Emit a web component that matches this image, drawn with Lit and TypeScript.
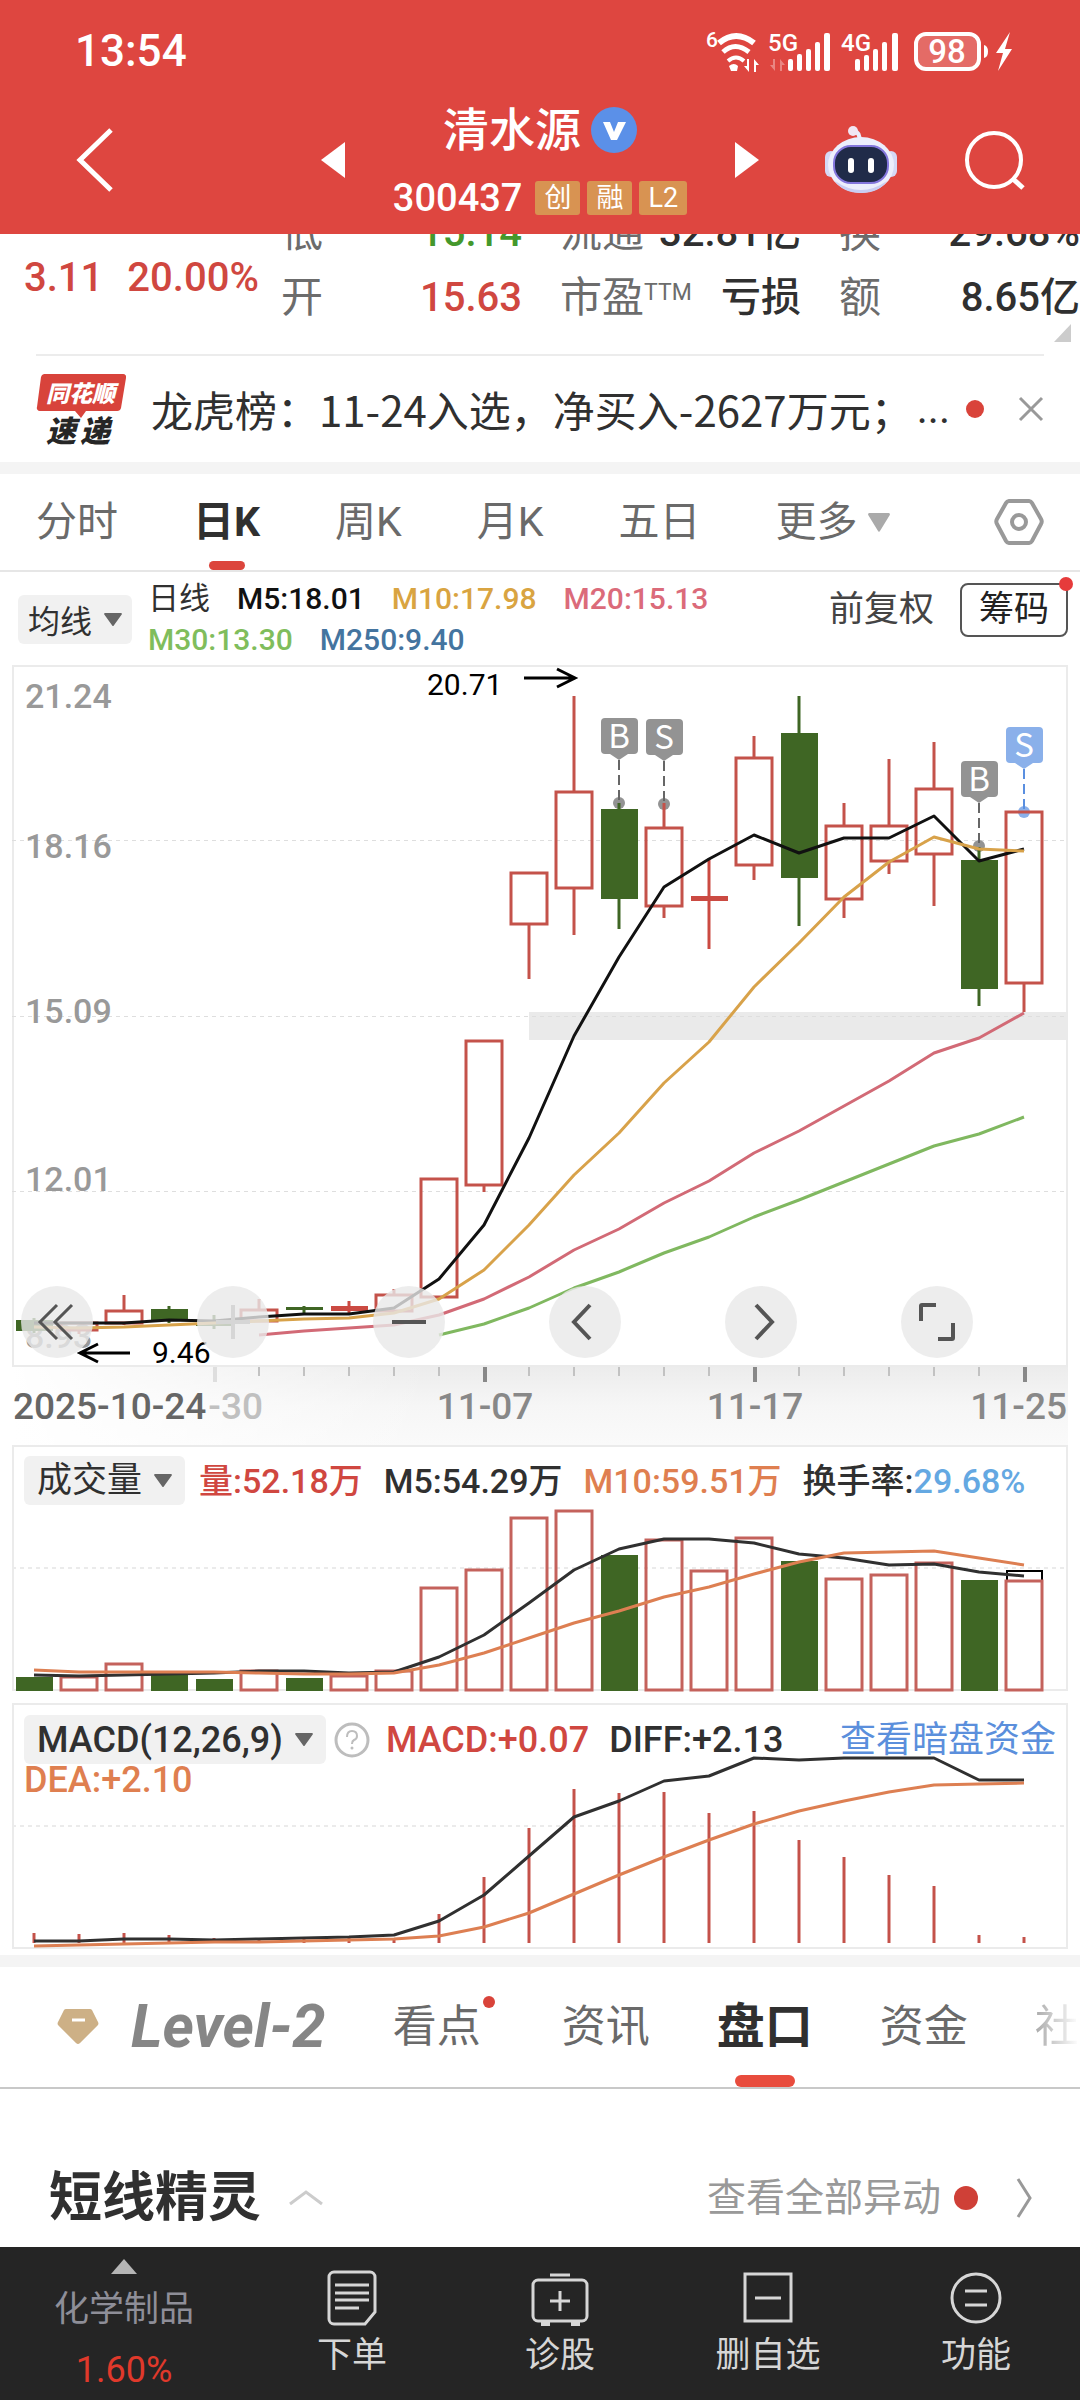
import { LitElement, html, svg, css } from 'lit';
import { customElement } from 'lit/decorators.js';

const FIRST_X = 34;
const STEP = 45;
const xAt = (i: number) => FIRST_X + STEP * i;
const points = (ys: number[], start = 0) => ys.map((y, i) => `${xAt(i + start)},${y}`).join(' ');

type Kind = 'up' | 'down' | 'flatUp' | 'flatDown';
// kind, body top, body bottom, high, low
const candles: [Kind, number, number, number, number][] = [
  ['down', 1320, 1331, 1318, 1333],
  ['up', 1323, 1330, 1322, 1334],
  ['up', 1311, 1323, 1295, 1325],
  ['down', 1309, 1320, 1306, 1323],
  ['flatDown', 1323, 1326, 1315, 1329],
  ['up', 1310, 1321, 1299, 1322],
  ['flatDown', 1307, 1310, 1306, 1315],
  ['flatUp', 1306, 1311, 1301, 1315],
  ['up', 1295, 1311, 1289, 1312],
  ['up', 1179, 1297, 1179, 1297],
  ['up', 1041, 1185, 1041, 1192],
  ['up', 873, 924, 873, 979],
  ['up', 792, 888, 696, 935],
  ['down', 809, 899, 803, 929],
  ['up', 828, 906, 803, 918],
  ['flatUp', 896, 901, 859, 949],
  ['up', 758, 865, 736, 880],
  ['down', 733, 878, 696, 926],
  ['up', 826, 899, 803, 918],
  ['up', 826, 861, 759, 874],
  ['up', 789, 854, 742, 906],
  ['down', 860, 989, 847, 1006],
  ['up', 812, 983, 812, 1012],
];
const ma5 = [1323, 1323, 1323, 1320, 1321, 1317, 1314, 1314, 1308, 1279, 1225, 1138, 1036, 957, 887, 859, 835, 853, 838, 838, 816, 861, 849];
const ma10 = [1327, 1328, 1327, 1325, 1323, 1321, 1319, 1318, 1313, 1299, 1270, 1225, 1175, 1133, 1083, 1042, 987, 943, 897, 862, 837, 849, 851];
const ma20 = [1335, 1331, 1328, 1325, 1315, 1299, 1277, 1250, 1229, 1203, 1181, 1153, 1131, 1106, 1081, 1053, 1038, 1013];
const ma30 = [1335, 1324, 1308, 1288, 1272, 1253, 1237, 1217, 1200, 1182, 1164, 1146, 1134, 1117];

const volumeTops = [1677, 1677, 1664, 1674, 1679, 1671, 1678, 1676, 1671, 1588, 1570, 1518, 1511, 1555, 1540, 1571, 1538, 1561, 1579, 1575, 1563, 1580, 1581];
const volumeDown = new Set([0, 3, 4, 6, 13, 17, 21]);
const volMa5 = [1675, 1676, 1675, 1674, 1673, 1671, 1671, 1673, 1672, 1657, 1635, 1603, 1570, 1549, 1539, 1539, 1543, 1554, 1558, 1565, 1564, 1572, 1576];
const volMa10 = [1670, 1672, 1672, 1672, 1672, 1673, 1674, 1674, 1673, 1665, 1653, 1638, 1623, 1611, 1597, 1587, 1574, 1562, 1553, 1552, 1551, 1558, 1565];

const macdTops = [1933, 1934, 1933, 1935, 1938, 1938, 1939, 1938, 1938, 1914, 1877, 1828, 1789, 1793, 1792, 1813, 1811, 1840, 1857, 1875, 1886, 1935, 1937];
const diff = [1941, 1941, 1939, 1939, 1940, 1939, 1938, 1937, 1935, 1921, 1895, 1856, 1817, 1801, 1781, 1776, 1758, 1760, 1758, 1758, 1758, 1780, 1780];
const dea = [1946, 1945, 1944, 1943, 1942, 1942, 1941, 1940, 1939, 1936, 1927, 1913, 1894, 1875, 1857, 1840, 1824, 1811, 1801, 1792, 1785, 1784, 1783];

const markers = [
  { i: 13, label: 'B', top: 718, dot: 803, box: '#939393', line: '#666' },
  { i: 14, label: 'S', top: 719, dot: 804, box: '#939393', line: '#666' },
  { i: 21, label: 'B', top: 761, dot: 846, box: '#939393', line: '#666' },
  { i: 22, label: 'S', top: 727, dot: 812, box: '#8ab0ea', line: '#5a8fe0' },
];

@customElement('app-root')
export class AppRoot extends LitElement {
  static styles = css`
    :host {
      display: block;
      background: #fff;
      color: #303030;
      font-family: Roboto, 'Noto Sans CJK SC', sans-serif;
    }
    * { box-sizing: border-box; }
    svg { display: block; }
    button, a {
      font: inherit;
      color: inherit;
      background: none;
      border: 0;
      padding: 0;
      margin: 0;
      text-decoration: none;
      white-space: nowrap;
    }
    h1, h2, p { margin: 0; font: inherit; }

    .top { background: #de4640; color: #fff; }
    .status {
      display: flex;
      justify-content: space-between;
      align-items: center;
      padding: 26px 66px 26px 75px;
      font-size: 44px;
      font-weight: 500;
      line-height: 50px;
    }
    .nav {
      display: grid;
      grid-template-columns: 1fr 438px 1fr;
      align-items: center;
      padding: 0 54px 16px;
    }
    .back { padding-left: 22px; }
    .nav-right { display: flex; justify-content: flex-end; align-items: center; gap: 67px; }
    .stock { display: flex; justify-content: space-between; align-items: center; }
    .stock-title { display: flex; flex-direction: column; align-items: center; gap: 20px; }
    .stock-name { display: flex; align-items: center; gap: 10px; font-size: 46px; line-height: 56px; font-weight: 500; }
    .stock-code { display: flex; align-items: center; gap: 7px; font-size: 38px; line-height: 40px; font-weight: 500; }
    .stock-code b { font-weight: 500; margin-right: 6px; }
    .tag { background: #d89352; border-radius: 3px; font-size: 27px; line-height: 34px; padding: 0 9px; font-weight: 400; }

    .quote { position: relative; overflow: hidden; }
    .quote-body { display: flex; margin-top: -34px; padding-bottom: 24px; }
    .change {
      display: flex;
      gap: 24px;
      width: 281px;
      flex: none;
      align-self: flex-end;
      padding: 0 0 32px 24px;
      font-size: 40px;
      line-height: 40px;
      font-weight: 500;
      color: #d04740;
    }
    .facts { flex: 1; margin: 0; display: grid; grid-template-columns: repeat(3, 1fr); column-gap: 38px; grid-auto-rows: 65px; }
    .fact { display: flex; justify-content: space-between; align-items: center; font-size: 40px; line-height: 64px; white-space: nowrap; }
    .fact dt { font-size: 42px; color: #6c6c6c; }
    .fact dt sup { font-size: 23px; line-height: 20px; vertical-align: 12px; }
    .fact dd { margin: 0; font-weight: 500; }
    .up { color: #d04740; }
    .down { color: #44982c; }
    .corner { position: absolute; right: 9px; bottom: 12px; }

    .news {
      display: flex;
      align-items: center;
      gap: 25px;
      margin: 0 36px;
      border-top: 2px solid #ececec;
      height: 108px;
    }
    .headline { flex: 1; display: flex; align-items: center; gap: 16px; font-size: 42px; line-height: 60px; min-width: 0; }
    .headline a { font-family: 'Noto Sans CJK SC', sans-serif; overflow: hidden; }
    .red-dot { display: inline-block; background: #d9433a; border-radius: 50%; width: 18px; height: 18px; flex: none; }
    .headline .red-dot { margin-left: auto; margin-right: 9px; }
    .band { height: 12px; background: #f4f4f4; }

    .periods {
      display: flex;
      align-items: stretch;
      gap: 75px;
      padding: 0 36px;
      border-bottom: 2px solid #e6e6e6;
      font-size: 41px;
      line-height: 96px;
      color: #6a6a6a;
    }
    .period { position: relative; }
    .period.more { display: flex; align-items: center; gap: 10px; }
    .period.active { font-weight: 700; color: #303030; }
    .period.active::after, .tab.active::after {
      content: '';
      position: absolute;
      left: 50%;
      bottom: 0;
      width: 36px;
      height: 9px;
      margin-left: -18px;
      border-radius: 5px;
      background: #dc453c;
    }
    .periods .setting { margin-left: auto; }

    .indicators { display: flex; align-items: center; padding: 6px 12px 4px 18px; height: 92px; gap: 16px; }
    .pick {
      display: flex;
      align-items: center;
      gap: 12px;
      height: 49px;
      padding: 0 13px;
      border-radius: 6px;
      background: #f1f1f1;
      color: #303030;
    }
    .pick.average { font-size: 32px; padding: 0 10px; }
    .legend { flex: 1; display: flex; flex-wrap: wrap; column-gap: 27px; font-size: 30px; line-height: 41px; font-weight: 500; }
    .legend .name { font-size: 31px; font-weight: 400; }
    .chip-actions { display: flex; align-items: center; align-self: flex-start; gap: 26px; padding-top: 5px; font-size: 35px; line-height: 50px; }
    .adjust { color: #444; }
    .chips { position: relative; padding: 0 17px; border: 2px solid #555; border-radius: 8px; color: #222; }
    .chips .red-dot { position: absolute; right: -7px; top: -8px; width: 14px; height: 14px; background: #e63b3b; }
    .black { color: #111; }
    .amber { color: #d9a441; }
    .rose { color: #db6b7a; }
    .green { color: #80bd5c; }
    .navy { color: #44749f; }
    .orange { color: #df7f50; }
    .sky { color: #64a8e2; }

    .panel { display: grid; }
    .panel > * { grid-area: 1 / 1; min-width: 0; }
    .panel svg.chart { width: 100%; height: auto; }
    .tools { display: flex; justify-content: space-between; align-self: end; padding: 0 107px 87px 21px; }
    .tool { width: 72px; height: 72px; border-radius: 50%; background: rgba(232, 232, 232, 0.8); display: grid; place-items: center; }
    .readout { display: flex; align-items: center; align-self: start; padding: 11px 24px 0; font-size: 34px; line-height: 48px; white-space: nowrap; font-weight: 500; }
    .readout .pick { font-size: 35px; margin-right: 14px; font-weight: 400; }
    .readout .value { margin-right: 21px; }
    .macd-readout { align-self: start; padding: 12px 24px 0; font-size: 36px; line-height: 48px; white-space: nowrap; font-weight: 500; }
    .macd-line { display: flex; align-items: center; }
    .macd-line .help { margin: 0 16px 0 8px; }
    .macd-line .value { margin-right: 20px; }
    .macd-line a { margin-left: auto; color: #5b8fdc; font-weight: 400; }
    .second { line-height: 32px; }
    .label { font-family: Roboto, sans-serif; }

    .tabs { display: flex; align-items: center; gap: 67px; padding-left: 57px; border-bottom: 2px solid #c8c8c8; overflow: hidden; font-size: 44px; line-height: 120px; color: #6a6a6a; }
    .tab { position: relative; flex: none; }
    .tab.level { display: flex; align-items: center; gap: 32px; color: #868686; font-size: 60px; font-style: italic; font-weight: 700; }
    .tab.dotted { display: flex; gap: 2px; }
    .tab.dotted .red-dot { width: 12px; height: 12px; margin-top: 29px; }
    .tab.active { font-size: 48px; font-weight: 700; color: #303030; }
    .tab.active::after { width: 60px; height: 12px; margin-left: -30px; border-radius: 6px; background: #e84c3d; }
    .tab.fade { background: linear-gradient(90deg, #aaa, #fff); background-clip: text; -webkit-background-clip: text; color: transparent; }

    .section-head { display: flex; align-items: center; padding: 60px 48px 0 49px; height: 158px; }
    .section-head h2 { font-size: 53px; line-height: 90px; font-weight: 700; margin-right: 28px; }
    .section-head a { margin-left: auto; display: flex; align-items: center; font-size: 39px; line-height: 60px; color: #999; }
    .section-head .red-dot { width: 24px; height: 24px; margin: 0 38px 0 13px; background: #cf4037; }

    .bottom { display: grid; grid-template-columns: 248fr 208fr 208fr 208fr 208fr; background: #252525; color: #d6d6d6; height: 153px; }
    .action { display: flex; flex-direction: column; align-items: center; justify-content: flex-end; gap: 6px; font-size: 35px; line-height: 48px; padding-bottom: 20px; }
    .sector { display: flex; flex-direction: column; align-items: center; padding-top: 12px; font-size: 35px; line-height: 48px; color: #8e8e98; }
    .sector svg { margin-bottom: 12px; }
    .sector .pct { color: #e0392b; font-size: 36px; margin-top: 12px; }
  `;

  private caret(color: string, w = 18, h = 13) {
    return html`<svg width=${w} height=${h} viewBox="0 0 18 13" preserveAspectRatio="none"><path d="M1 0h16a1 1 0 0 1 .7 1.6L9.8 12.4a1 1 0 0 1-1.6 0L.3 1.6A1 1 0 0 1 1 0z" fill=${color} /></svg>`;
  }

  private statusIcons() {
    return html`<svg width="308" height="44" viewBox="706 28 308 44" fill="#fff" role="img" aria-label="状态栏">
      <text x="706" y="46" font-size="21" font-weight="500">6</text>
      <g fill="none" stroke="#fff" stroke-width="5">
        <path d="M719 42q17-14 35 0" stroke-width="6" />
        <path d="M723 51q12-11 26 0" />
        <path d="M728 60q8-7 16 0" stroke-width="4" />
      </g>
      <path d="M729 65q5-4 9 0l-1 5h-6z" />
      <path d="M749 58v13l-5-6h3v-7zM754 71V58l5 6h-3v7z" />
      <text x="768" y="50" font-size="24" font-weight="500">5G</text>
      <path d="M775 58v12l-5-6h3v-6zM780 70V58l5 6h-3v6z" opacity=".35" />
      <g>
        <rect x="788" y="58" width="5" height="12" rx="2" /><rect x="797" y="53" width="5" height="17" rx="2" />
        <rect x="806" y="48" width="5" height="22" rx="2" /><rect x="815" y="41" width="5" height="29" rx="2" />
        <rect x="824" y="32" width="6" height="38" rx="2" />
      </g>
      <text x="841" y="50" font-size="24" font-weight="500">4G</text>
      <g>
        <rect x="855" y="58" width="5" height="12" rx="2" /><rect x="864" y="54" width="5" height="16" rx="2" />
        <rect x="873" y="48" width="5" height="22" rx="2" /><rect x="882" y="41" width="5" height="29" rx="2" />
        <rect x="892" y="32" width="6" height="38" rx="2" />
      </g>
      <rect x="916" y="33" width="63" height="35" rx="10" fill="rgba(255,255,255,.2)" stroke="#fff" stroke-width="4" />
      <text x="947" y="62" font-size="33" font-weight="500" text-anchor="middle">98</text>
      <path d="M984 44q4 1 4 6.500t-4 6.500z" />
      <path d="M1010 31l-14 21h7l-5 18 14-22h-7z" />
    </svg>`;
  }

  private robot() {
    return html`<svg width="74" height="70" viewBox="823 124 74 70">
      <path d="M859 140q2-8-5-10" fill="none" stroke="#e9ecfb" stroke-width="4" />
      <circle cx="853" cy="130" r="5" fill="#f1e6f3" />
      <rect x="825" y="150" width="12" height="26" rx="6" fill="#d5d9f6" /><rect x="885" y="150" width="12" height="26" rx="6" fill="#d5d9f6" />
      <ellipse cx="861" cy="164" rx="33" ry="28" fill="#eceefc" />
      <path d="M835 180q26 18 52 0-8 12-26 12t-26-12z" fill="#c9cef3" />
      <rect x="834" y="145" width="54" height="37" rx="17" fill="#202b49" stroke="#8376dc" stroke-width="2" />
      <rect x="848" y="157" width="6" height="15" rx="3" fill="#fff" /><rect x="868" y="157" width="6" height="15" rx="3" fill="#fff" />
    </svg>`;
  }

  private header() {
    return html`<header class="top">
      <div class="status"><span>13:54</span>${this.statusIcons()}</div>
      <div class="nav">
        <button class="back" aria-label="返回"><svg width="38" height="66" viewBox="0 0 38 66"><path d="M35 3L4 33l31 30" fill="none" stroke="#fff" stroke-width="5" /></svg></button>
        <div class="stock">
          <button aria-label="上一只"><svg width="24" height="36" viewBox="0 0 24 36"><path d="M24 0v36L0 18z" fill="#fff" /></svg></button>
          <div class="stock-title">
            <h1 class="stock-name">清水源<svg width="46" height="46" viewBox="0 0 46 46"><circle cx="23" cy="23" r="23" fill="#5b90e8" /><path d="M12 15h7l4 10 4-10h8l-9 18h-6z" fill="#fff" /></svg></h1>
            <div class="stock-code"><b>300437</b><span class="tag">创</span><span class="tag">融</span><span class="tag">L2</span></div>
          </div>
          <button aria-label="下一只"><svg width="24" height="36" viewBox="0 0 24 36"><path d="M0 0v36l24-18z" fill="#fff" /></svg></button>
        </div>
        <div class="nav-right">
          <button aria-label="智能助手">${this.robot()}</button>
          <button aria-label="搜索"><svg width="62" height="62" viewBox="0 0 62 62" fill="none" stroke="#fff" stroke-width="4"><circle cx="30" cy="31" r="27" /><path d="M49 50l10 9" stroke-width="5" /></svg></button>
        </div>
      </div>
    </header>`;
  }

  private quote() {
    return html`<section class="quote">
      <div class="quote-body">
        <div class="change"><span>3.11</span><span>20.00%</span></div>
        <dl class="facts">
          <div class="fact"><dt>低</dt><dd class="down">15.14</dd></div>
          <div class="fact"><dt>流通</dt><dd>32.81亿</dd></div>
          <div class="fact"><dt>换</dt><dd>29.68%</dd></div>
          <div class="fact"><dt>开</dt><dd class="up">15.63</dd></div>
          <div class="fact"><dt>市盈<sup>TTM</sup></dt><dd>亏损</dd></div>
          <div class="fact"><dt>额</dt><dd>8.65亿</dd></div>
        </dl>
      </div>
      <svg class="corner" width="17" height="18" viewBox="0 0 17 18"><path d="M17 0v18H0z" fill="#ccc" /></svg>
    </section>
    <section class="news">
      <svg width="90" height="74" viewBox="36 370 90 74" role="img" aria-label="同花顺速递">
        <path d="M44 372h79a3 3 0 0 1 3 4l-5 30a4 4 0 0 1-4 3H86l-5 7-6-7H40a3 3 0 0 1-3-4l4-30a4 4 0 0 1 3-3z" fill="#d8433b" />
        <text x="46" y="400" font-size="23" font-weight="900" font-style="italic" fill="#fff">同花顺</text>
        <text x="46" y="440" font-size="30" font-weight="900" font-style="italic" fill="#262626">速</text>
        <text x="80" y="440" font-size="30" font-weight="900" font-style="italic" fill="#262626">递</text>
      </svg>
      <div class="headline"><a href="#news">龙虎榜：11-24入选，净买入-2627万元；</a><span>...</span><i class="red-dot"></i></div>
      <button aria-label="关闭"><svg width="26" height="26" viewBox="0 0 26 26"><path d="M2 2l22 22M24 2L2 24" stroke="#999" stroke-width="3" /></svg></button>
    </section>`;
  }

  private periods() {
    return html`<nav class="periods">
      <button class="period">分时</button>
      <button class="period active">日K</button>
      <button class="period">周K</button>
      <button class="period">月K</button>
      <button class="period">五日</button>
      <button class="period more">更多${this.caret('#aaa', 22, 19)}</button>
      <button class="setting" aria-label="设置"><svg width="50" height="48" viewBox="0 0 50 48" fill="none" stroke="#999" stroke-width="4"><path d="M15 3h20a4 4 0 0 1 3 2l9 16a5 5 0 0 1 0 5l-9 17a4 4 0 0 1-3 2H15a4 4 0 0 1-3-2L3 26a5 5 0 0 1 0-5l9-16a4 4 0 0 1 3-2z" /><circle cx="25" cy="24" r="7" /></svg></button>
    </nav>
    <div class="indicators">
      <button class="pick average">均线${this.caret('#666')}</button>
      <div class="legend">
        <span class="name">日线</span><span class="black">M5:18.01</span><span class="amber">M10:17.98</span><span class="rose">M20:15.13</span>
        <span class="green">M30:13.30</span><span class="navy">M250:9.40</span>
      </div>
      <div class="chip-actions">
        <button class="adjust">前复权</button>
        <button class="chips">筹码<i class="red-dot"></i></button>
      </div>
    </div>`;
  }

  private candle([kind, top, bottom, high, low]: [Kind, number, number, number, number], i: number) {
    const x = xAt(i);
    const red = '#c4524a';
    const green = '#3f6624';
    if (kind === 'up') {
      return svg`<path d="M${x} ${high}V${top}M${x} ${bottom}V${low}" stroke=${red} stroke-width="3" />
        <rect x=${x - 18} y=${top} width="36" height=${bottom - top} fill="none" stroke=${red} stroke-width="3" />`;
    }
    const color = kind === 'flatUp' ? '#cb4a42' : green;
    return svg`<path d="M${x} ${high}V${low}" stroke=${color} stroke-width="3" />
      <rect x=${x - 18} y=${top} width="37" height=${bottom - top} fill=${color} />`;
  }

  private priceChart() {
    return html`<section class="panel">
      <svg class="chart label" viewBox="0 664 1080 781" fill="none">
        <defs>
          <linearGradient id="axisDown" x1="0" y1="0" x2="0" y2="1"><stop offset="0" stop-color="#ececec" /><stop offset=".5" stop-color="#f6f6f6" /><stop offset="1" stop-color="#fafafa" /></linearGradient>
          <linearGradient id="axisSide" x1="0" y1="0" x2="1" y2="0"><stop offset="0" stop-color="#fff" /><stop offset="1" stop-color="#fff" stop-opacity="0" /></linearGradient>
        </defs>
        <rect x="12" y="1367" width="1056" height="78" fill="url(#axisDown)" />
        <rect x="12" y="1367" width="420" height="78" fill="url(#axisSide)" />
        <rect x="13" y="666" width="1054" height="700" stroke="#ebebeb" stroke-width="2" />
        <rect x="529" y="1012" width="539" height="28" fill="#eaeaea" />
        <g stroke="#dedede" stroke-dasharray="4 4"><path d="M12 840.500H1066M12 1016.500H1066M12 1191.500H1066" /></g>
        <g font-size="34" font-weight="500" fill="#999">
          <text x="25" y="708">21.24</text><text x="25" y="858">18.16</text><text x="25" y="1023">15.09</text><text x="25" y="1191">12.01</text><text x="25" y="1348">8.93</text>
        </g>
        ${markers.map(m => svg`<circle cx=${xAt(m.i)} cy=${m.dot} r="6" fill=${m.box} />
          <path d="M${xAt(m.i)} ${m.top + 42}V${m.dot}" stroke=${m.line} stroke-width="2" stroke-dasharray="10 5" />`)}
        ${candles.map((c, i) => this.candle(c, i))}
        <g stroke-width="3" stroke-linejoin="round">
          <polyline points=${points(ma30, 9)} stroke="#80b860" />
          <polyline points=${points(ma20, 5)} stroke="#d26a76" />
          <polyline points=${points(ma5)} stroke="#111" />
          <polyline points=${points(ma10)} stroke="#d8a24a" />
        </g>
        ${markers.map(m => svg`<rect x=${xAt(m.i) - 18} y=${m.top} width="37" height="36" rx="4" fill=${m.box} />
          <path d="M${xAt(m.i) - 9} ${m.top + 36}h18l-9 6z" fill=${m.box} />
          <text x=${xAt(m.i)} y=${m.top + 30} text-anchor="middle" font-size="33" font-family="Noto Sans CJK SC" fill="#fff">${m.label}</text>`)}
        <g fill="#000" font-size="30"><text x="427" y="695">20.71</text><text x="152" y="1363">9.46</text></g>
        <path d="M524 678h50M557 669l18 9-18 9M130 1353H80M98 1344l-18 9 18 9" stroke="#000" stroke-width="3" />
        ${candles.map((_, i) => i < 4 ? null : i % 6 === 4
          ? svg`<path d="M${xAt(i) + 1} 1367v15" stroke=${i === 4 ? '#dedede' : '#888'} stroke-width="4" />`
          : svg`<path d="M${xAt(i)} 1367v9" stroke="#c2c2c2" stroke-width="2" />`)}
        <g font-size="37" font-weight="500" fill="#888">
          <text x="13" y="1419" fill="#666">2025-10-24</text><text x="263" y="1419" fill="#c0c0c0" text-anchor="end">-30</text>
          <text x="485" y="1419" text-anchor="middle">11-07</text><text x="755" y="1419" text-anchor="middle">11-17</text><text x="1067" y="1419" text-anchor="end">11-25</text>
        </g>
      </svg>
      <div class="tools">
        <button class="tool" aria-label="最早"><svg width="40" height="40" viewBox="0 0 40 40" fill="none" stroke="#555" stroke-width="3"><path d="M20 3L3 20l17 17M35 3L18 20l17 17" /></svg></button>
        <button class="tool" aria-label="放大"><svg width="40" height="40" viewBox="0 0 40 40" stroke="#d6d6d6" stroke-width="4"><path d="M20 3v34M3 20h34" /></svg></button>
        <button class="tool" aria-label="缩小"><svg width="40" height="40" viewBox="0 0 40 40" stroke="#555" stroke-width="4"><path d="M3 20h34" /></svg></button>
        <button class="tool" aria-label="向前"><svg width="40" height="40" viewBox="0 0 40 40" fill="none" stroke="#555" stroke-width="4"><path d="M25 3L9 20l16 17" /></svg></button>
        <button class="tool" aria-label="向后"><svg width="40" height="40" viewBox="0 0 40 40" fill="none" stroke="#555" stroke-width="4"><path d="M15 3l16 17-16 17" /></svg></button>
        <button class="tool" aria-label="全屏"><svg width="40" height="40" viewBox="0 0 40 40" fill="none" stroke="#555" stroke-width="4"><path d="M4 19V4a1 1 0 0 1 1-1h14M36 21v15a1 1 0 0 1-1 1H21" /></svg></button>
      </div>
    </section>`;
  }

  private volumeChart() {
    return html`<section class="panel">
      <svg class="chart" viewBox="0 1445 1080 258" fill="none">
        <rect x="13" y="1446" width="1054" height="244" stroke="#ebebeb" stroke-width="2" />
        <path d="M12 1568H1066" stroke="#ebebeb" stroke-width="2" stroke-dasharray="4 4" />
        <path d="M1007 1580v-9h35v9" stroke="#000" stroke-width="2" />
        ${volumeTops.map((y, i) => volumeDown.has(i)
          ? svg`<rect x=${xAt(i) - 18} y=${y} width="37" height=${1691 - y} fill="#3f6624" />`
          : svg`<rect x=${xAt(i) - 18} y=${y} width="36" height=${1690 - y} stroke="#c4625c" stroke-width="3" />`)}
        <g stroke-width="3" stroke-linejoin="round"><polyline points=${points(volMa5)} stroke="#303030" /><polyline points=${points(volMa10)} stroke="#dd7f52" /></g>
      </svg>
      <div class="readout">
        <button class="pick">成交量${this.caret('#666')}</button>
        <span class="value up">量:52.18万</span><span class="value">M5:54.29万</span><span class="value orange">M10:59.51万</span><span>换手率:</span><span class="sky">29.68%</span>
      </div>
    </section>`;
  }

  private macdChart() {
    return html`<section class="panel">
      <svg class="chart" viewBox="0 1703 1080 252" fill="none">
        <rect x="13" y="1704" width="1054" height="244" stroke="#ebebeb" stroke-width="2" />
        <path d="M12 1826H1066" stroke="#ebebeb" stroke-width="2" stroke-dasharray="4 4" />
        ${macdTops.map((y, i) => svg`<path d="M${xAt(i)} ${y}V1943" stroke="#c4524a" stroke-width="3" />`)}
        <g stroke-width="3" stroke-linejoin="round"><polyline points=${points(diff)} stroke="#303030" /><polyline points=${points(dea)} stroke="#dd7f52" /></g>
      </svg>
      <div class="macd-readout">
        <div class="macd-line">
          <button class="pick">MACD(12,26,9)${this.caret('#666')}</button>
          <button class="help" aria-label="说明"><svg width="36" height="36" viewBox="0 0 36 36"><circle cx="18" cy="18" r="16" fill="none" stroke="#bdbdbd" stroke-width="3" /><path d="M13 15q0-6 5-6t5 5q0 3-3 4-2 1-2 4" fill="none" stroke="#bdbdbd" stroke-width="2" /><circle cx="18" cy="26" r="1.500" fill="#bdbdbd" /></svg></button>
          <span class="value up">MACD:+0.07</span><span class="value">DIFF:+2.13</span>
          <a href="#funds">查看暗盘资金</a>
        </div>
        <div class="second orange">DEA:+2.10</div>
      </div>
    </section>`;
  }

  render() {
    return html`${this.header()}
      <main>
        ${this.quote()}
        <div class="band"></div>
        ${this.periods()}${this.priceChart()}${this.volumeChart()}${this.macdChart()}
        <div class="band"></div>
        <nav class="tabs">
          <button class="tab level"><svg width="42" height="42" viewBox="0 0 42 42"><path d="M9 3h24a3 3 0 0 1 2 1l6 12a3 3 0 0 1 0 3L23 37a3 3 0 0 1-4 0L1 19a3 3 0 0 1 0-3L7 4a3 3 0 0 1 2-1z" fill="#cdb086" /><path d="M15 14h13" stroke="#fff" stroke-width="3" /></svg>Level-2</button>
          <button class="tab dotted">看点<i class="red-dot"></i></button>
          <button class="tab">资讯</button>
          <button class="tab active">盘口</button>
          <button class="tab">资金</button>
          <button class="tab fade">社</button>
        </nav>
        <section class="section-head">
          <h2>短线精灵</h2>
          <button aria-label="收起"><svg width="34" height="16" viewBox="0 0 34 16"><path d="M1 14L17 2l16 12" fill="none" stroke="#ccc" stroke-width="3" /></svg></button>
          <a href="#moves">查看全部异动<i class="red-dot"></i><svg width="16" height="42" viewBox="0 0 16 42"><path d="M2 2l12 19L2 40" fill="none" stroke="#999" stroke-width="3" /></svg></a>
        </section>
      </main>
      <footer class="bottom">
        <button class="sector"><svg width="26" height="15" viewBox="0 0 26 15"><path d="M13 0l13 15H0z" fill="#b5b5b5" /></svg><span>化学制品</span><span class="pct">1.60%</span></button>
        <button class="action"><svg width="50" height="56" viewBox="0 0 50 56" fill="none" stroke="#d6d6d6" stroke-width="3"><path d="M7 2h36a5 5 0 0 1 5 5v35L38 54H7a5 5 0 0 1-5-5V7a5 5 0 0 1 5-5z" /><path d="M8 15h34M8 23h34M8 30h34M8 38h24" /></svg>下单</button>
        <button class="action"><svg width="58" height="54" viewBox="0 0 58 54" fill="none" stroke="#d6d6d6" stroke-width="3"><rect x="2" y="8" width="54" height="41" rx="5" /><path d="M19 3h20M29 19v20M19 29h20" /><path d="M10 52h9M40 52h9" stroke-width="4" /></svg>诊股</button>
        <button class="action"><svg width="50" height="56" viewBox="0 0 50 56" fill="none" stroke="#d6d6d6" stroke-width="3"><rect x="2" y="4" width="46" height="47" /><path d="M12 28h26" /></svg>删自选</button>
        <button class="action"><svg width="52" height="56" viewBox="0 0 52 56" fill="none" stroke="#d6d6d6" stroke-width="3"><circle cx="26" cy="28" r="24" /><path d="M15 21h22M15 35h22" /></svg>功能</button>
      </footer>`;
  }
}
